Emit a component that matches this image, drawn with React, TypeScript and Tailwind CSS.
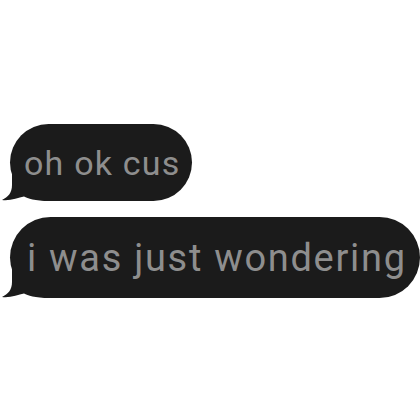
function Tail() {
  return (
    <svg
      className="absolute left-[-10px] bottom-0 h-[40px] w-[50px]"
      viewBox="0 0 50 40"
      fill="#1b1b1b"
    >
      <path d="M12 0 L12 24 C12 32 8 36 2 39 C10 40 18 37 24 35.5 C28 37.5 34 40 50 40 L50 0 Z" />
    </svg>
  );
}

export default function App() {
  return (
    <div className="h-[420px] w-[420px] bg-white pt-[124px] pl-[10px] font-['Roboto',sans-serif] flex flex-col gap-[16px]">
      <div className="relative self-start flex h-[77px] items-center rounded-full bg-[#1b1b1b] pl-[14px] pr-[11px]">
        <Tail />
        <span className="relative whitespace-nowrap text-[34px] leading-none tracking-[1.2px] text-[#8e8e8e]">oh ok cus</span>
      </div>
      <div className="relative self-start flex h-[81px] items-center rounded-full bg-[#1b1b1b] pl-[17px] pr-[13px]">
        <Tail />
        <span className="relative whitespace-nowrap text-[38px] leading-none tracking-[1.7px] text-[#8e8e8e]">i was just wondering</span>
      </div>
    </div>
  );
}
